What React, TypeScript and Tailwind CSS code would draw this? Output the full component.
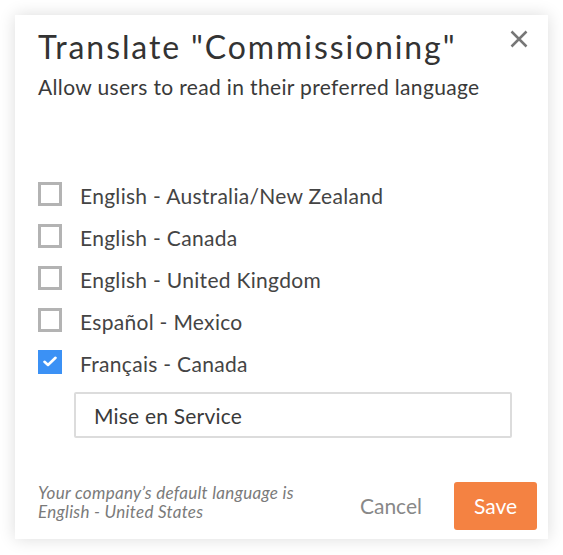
import { useState } from "react";

const languages = [
  { name: "English - Australia/New Zealand", checked: false },
  { name: "English - Canada", checked: false },
  { name: "English - United Kingdom", checked: false },
  { name: "Español - Mexico", checked: false },
  { name: "Français - Canada", checked: true },
];

function Checkbox({ checked }: { checked: boolean }) {
  if (checked) {
    return (
      <span className="flex h-6 w-6 items-center justify-center bg-[#3b91f5]">
        <svg width="14" height="11" viewBox="0 0 14 11" fill="none">
          <path d="M1.5 5.8 L5 9 L12.5 1.8" stroke="white" strokeWidth="2.6" strokeLinecap="round" strokeLinejoin="round" />
        </svg>
      </span>
    );
  }
  return <span className="block h-6 w-6 border-[3px] border-[#b3b3b3] bg-white" />;
}

export default function App() {
  const [value, setValue] = useState("Mise en Service");

  return (
    <div className="h-[555px] w-[563px] bg-white p-[15px] font-['Lato','Noto_Sans',sans-serif] text-[#333]">
      <div className="relative flex h-[524px] w-[533px] flex-col bg-white pl-[23px] pr-[11px] pt-[13px] pb-[9px] shadow-[0_0_16px_rgba(0,0,0,0.14)]">
        {/* Close */}
        <button className="absolute right-[20px] top-[15px] h-[18px] w-[18px]">
          <svg width="18" height="18" viewBox="0 0 18 18" className="block">
            <path d="M1.5 1.5 L16.5 16.5 M16.5 1.5 L1.5 16.5" stroke="#777" strokeWidth="2.5" />
          </svg>
        </button>

        {/* Header */}
        <h1 className="text-[32px] leading-[38px] tracking-[1.9px] text-[#333]">Translate "Commissioning"</h1>
        <p className="mt-[9px] text-[21px] leading-[24px] tracking-[0.35px] text-[#3a3a3a]">
          Allow users to read in their preferred language
        </p>

        {/* Language list */}
        <div className="mt-[76px] flex flex-col">
          {languages.map((lang) => (
            <label key={lang.name} className="flex h-[42px] items-center gap-[18px]">
              <span className="-mt-[5px]">
                <Checkbox checked={lang.checked} />
              </span>
              <span className="text-[21px] leading-[24px] tracking-[0.3px] text-[#444]">{lang.name}</span>
            </label>
          ))}
        </div>

        <div className="mt-[7px] pl-[36px] pr-[25px]">
          <input
            value={value}
            onChange={(e) => setValue(e.target.value)}
            className="h-[46px] w-full rounded-[2px] border-2 border-[#dcdcdc] px-[18px] text-[21px] tracking-[0.2px] text-[#3a3a3a] outline-none"
          />
        </div>

        {/* Footer */}
        <div className="mt-auto flex items-center">
          <p className="-mt-[8px] text-[17px] italic leading-[19px] tracking-[0.3px] text-[#7a7a7a]">
            Your company’s default language is
            <br />
            English - United States
          </p>
          <button className="ml-auto mr-[32px] text-[21px] text-[#888]">Cancel</button>
          <button className="h-[48px] w-[83px] rounded-[3px] bg-[#f48242] text-[21px] text-white">Save</button>
        </div>
      </div>
    </div>
  );
}
